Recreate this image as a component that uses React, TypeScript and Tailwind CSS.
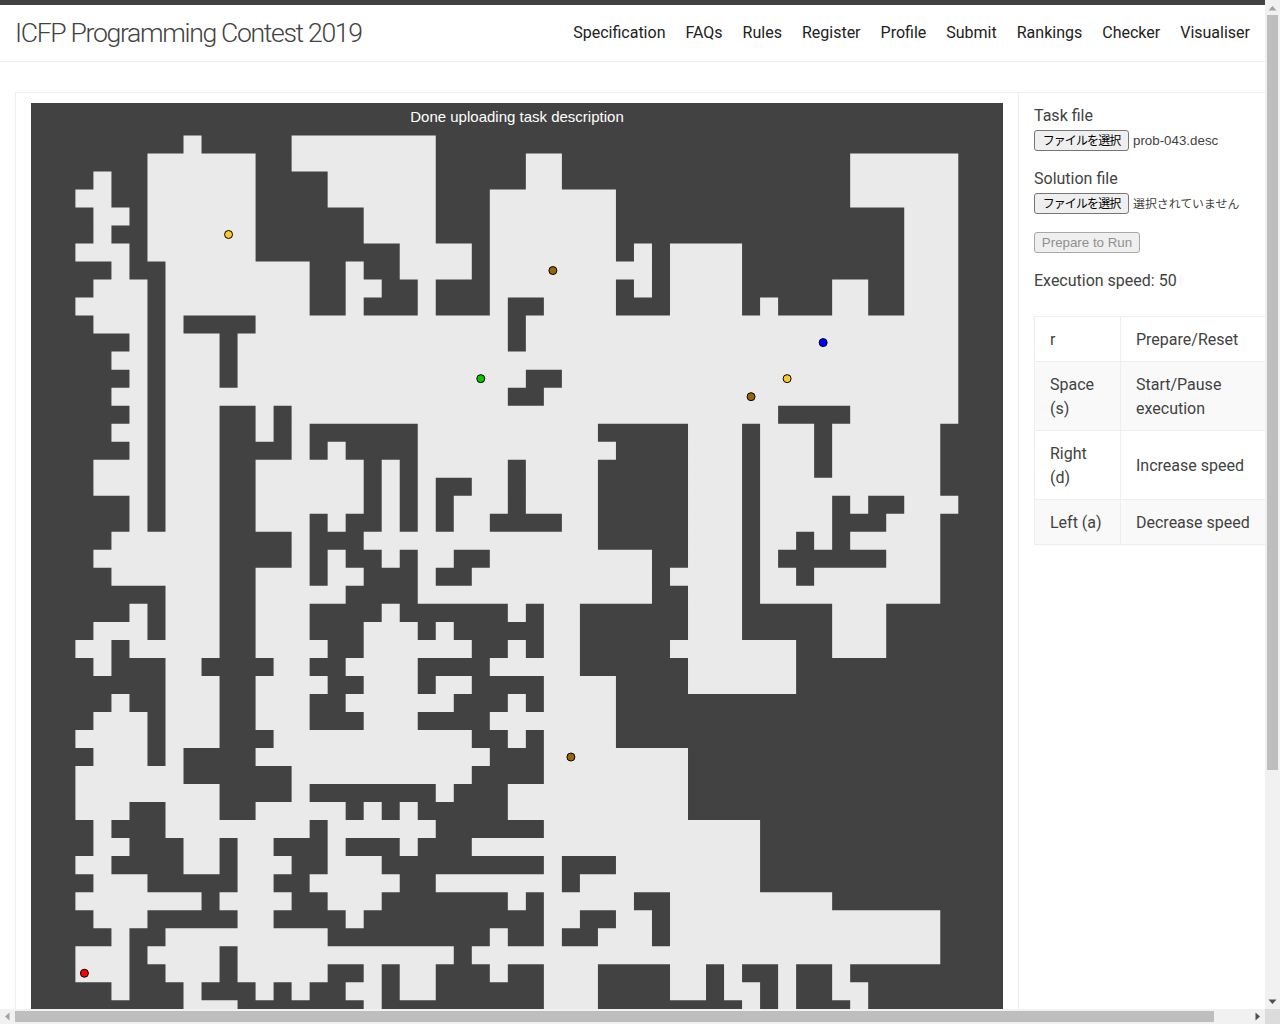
const NAV_ITEMS = ["Specification", "FAQs", "Rules", "Register", "Profile", "Submit", "Rankings", "Checker", "Visualiser"]

// light cell runs per row, start-end columns (exclusive)
const ROWS = [
  "6-7 12-20",
  "4-10 12-20 25-27 43-49",
  "1-2 4-10 14-20 25-27 43-49",
  "0-2 4-10 14-20 23-30 43-49",
  "1-3 4-10 16-20 23-30 46-49",
  "1-2 4-10 16-20 23-30 46-49",
  "0-3 4-10 18-22 23-30 31-32 33-37 46-49",
  "2-3 5-13 15-16 18-22 23-32 33-37 46-49",
  "1-4 5-13 15-17 19-20 23-30 31-32 33-37 42-44 46-49",
  "0-4 5-13 15-16 19-20 23-24 26-30 33-37 38-39 42-44 46-49",
  "1-4 5-6 10-24 25-49",
  "3-4 5-8 9-24 25-49",
  "2-4 5-8 9-49",
  "3-4 5-8 9-25 27-49",
  "2-4 5-24 26-49",
  "3-4 5-8 10-11 12-39 43-49",
  "2-4 5-8 10-11 12-13 19-29 34-37 38-41 42-48",
  "3-4 5-8 12-13 14-15 19-30 34-37 38-41 42-48",
  "1-4 5-8 10-16 17-18 19-24 25-29 34-37 38-41 42-48",
  "1-4 5-8 10-16 17-18 19-20 22-24 25-29 34-37 38-48",
  "3-4 5-8 10-16 17-18 19-20 21-24 25-29 34-37 38-42 43-44 46-49",
  "3-4 5-8 10-13 14-15 17-18 19-20 21-23 27-29 34-37 38-42 45-48",
  "2-8 12-13 16-29 34-37 38-40 41-42 43-48",
  "1-8 12-13 14-15 17-18 19-21 23-32 34-37 38-39 45-48",
  "2-8 10-13 14-16 19-20 22-32 33-37 38-40 41-48",
  "5-8 10-15 19-32 34-37 38-48",
  "3-4 5-8 10-13 17-18 24-25 26-28 34-37 42-45",
  "1-4 5-8 10-13 16-19 20-21 26-28 34-37 42-45",
  "0-2 3-8 10-14 16-22 24-25 26-28 33-40 42-45",
  "1-2 5-7 11-13 15-19 23-28 34-40",
  "5-8 10-14 16-19 20-22 26-30 34-40",
  "2-3 5-8 10-13 15-21 24-25 26-30",
  "1-4 5-8 10-13 16-19 23-30",
  "0-4 5-8 11-22 24-25 26-30",
  "1-4 5-6 10-23 26-34",
  "0-6 12-22 26-34",
  "0-8 12-13 20-21 24-34",
  "0-3 5-8 10-15 16-17 18-19 24-34",
  "1-2 5-13 14-20 26-38",
  "1-3 6-8 9-11 14-15 18-19 22-38",
  "0-2 6-8 9-12 14-17 26-27 30-38",
  "1-4 9-11 13-18 20-27 28-38",
  "0-7 8-12 14-17 24-25 26-31 33-42",
  "1-4 9-11 15-16 26-28 30-32 33-48",
  "2-3 5-14 23-24 26-27 29-32 33-48",
  "0-3 4-8 9-21 22-48",
  "0-3 5-8 9-14 16-17 18-20 23-24 26-29 33-35 36-37 39-40 42-43",
  "2-3 6-7 10-11 12-13 15-17 18-20 26-29 33-35 36-38 39-40 42-44",
  "6-9 16-17 26-29 37-38 39-40 43-44",
]

const CELL = 18.018
const ORIGIN_X = 44.4
const ORIGIN_Y = 32.4

// one path for the whole floor so rows don't get seams between them
const floorPath = ROWS.map((row, r) =>
  row
    .split(" ")
    .map((run) => {
      const [a, b] = run.split("-").map(Number)
      const x = ORIGIN_X + a * CELL
      const y = ORIGIN_Y + r * CELL
      const w = (b - a) * CELL
      return `M${x} ${y}h${w}v${CELL}h${-w}z`
    })
    .join(""),
).join("")

// boosters and workers, by cell
const DOTS = [
  { c: 8, r: 5, fill: "#ffc92e" },
  { c: 26, r: 7, fill: "#996600" },
  { c: 41, r: 11, fill: "#0000ff" },
  { c: 39, r: 13, fill: "#ffc92e" },
  { c: 37, r: 14, fill: "#996600" },
  { c: 22, r: 13, fill: "#00cc00" },
  { c: 27, r: 34, fill: "#996600" },
  { c: 0, r: 46, fill: "#ff0000" },
]

const KEYS = [
  ["r", "Prepare/Reset"],
  ["Space (s)", "Start/Pause execution"],
  ["Right (d)", "Increase speed"],
  ["Left (a)", "Decrease speed"],
]

function FileRow({ children }: { children: React.ReactNode }) {
  return (
    <div className="mb-[15px] flex h-6 items-start pt-[3px]">
      <button className="h-[21px] w-[95px] rounded-[3px] border border-[#767676] bg-[#efefef] pb-[2px] text-center font-['Noto_Sans_CJK_JP',sans-serif] text-[12px] leading-[16px] tracking-[-0.9px] whitespace-nowrap text-black">
        ファイルを選択
      </button>
      {children}
    </div>
  )
}

function Arrow({ points, fill }: { points: string; fill: string }) {
  return (
    <svg width="15" height="15" className="shrink-0">
      <polygon points={points} fill={fill} />
    </svg>
  )
}

export default function App() {
  return (
    <div className="grid h-[1024px] w-[1280px] grid-cols-[1265px_15px] grid-rows-[1009px_15px] overflow-hidden bg-white font-['Roboto',sans-serif] text-[#424242]">
      <div className="overflow-hidden">
        {/* Navbar */}
        <nav className="flex h-[62px] items-center justify-between border-t-[5px] border-b border-t-[#424242] border-b-[#eeeeee] px-[15px]">
          <a className="text-[26.6px] leading-[30px] font-light tracking-[-1.33px] text-[#424242]">ICFP Programming Contest 2019</a>
          <ul className="flex gap-5 text-base leading-6 text-[#212121]">
            {NAV_ITEMS.map((item) => (
              <li key={item}>{item}</li>
            ))}
          </ul>
        </nav>

        {/* Main card */}
        <div className="w-[1303px] px-[15px] pt-[30px] pb-[15px]">
          <div className="flex border border-[#eeeeee]">
            <div className="w-[1002px] shrink-0 px-[15px] py-[10px]">
              <div className="relative">
                <svg width="972" height="1179" className="bg-[#424242]">
                  <path d={floorPath} fill="#eaeaea" />
                  {DOTS.map((d) => (
                    <circle
                      key={`${d.c}-${d.r}`}
                      cx={ORIGIN_X + (d.c + 0.5) * CELL}
                      cy={ORIGIN_Y + (d.r + 0.5) * CELL}
                      r="4"
                      fill={d.fill}
                      stroke="#000"
                      strokeWidth="1"
                    />
                  ))}
                </svg>
                <div className="absolute top-[5px] right-0 left-0 text-center font-['Liberation_Sans',sans-serif] text-[15px] leading-[18px] text-white">
                  Done uploading task description
                </div>
              </div>
            </div>

            {/* Controls */}
            <div className="min-w-0 flex-1 border-l border-[#eeeeee] px-[15px] pt-[10px]">
              <label className="block h-6 text-base leading-[26px]">Task file</label>
              <FileRow>
                <span className="ml-1 font-['Liberation_Sans',sans-serif] text-[13.33px] leading-[21px] text-[#424242]">prob-043.desc</span>
              </FileRow>
              <label className="block h-6 text-base leading-[26px]">Solution file</label>
              <FileRow>
                <span className="ml-1 font-['Noto_Sans_CJK_JP',sans-serif] text-[11.9px] leading-[20px] text-[#424242]">選択されていません</span>
              </FileRow>
              <div className="mb-[15px] flex h-6 items-start pt-[3px]">
                <button
                  disabled
                  className="h-[21px] w-[106px] rounded-[3px] border border-[#a8a8a8] bg-[#efefef] text-center font-['Liberation_Sans',sans-serif] text-[13.33px] leading-[18px] text-[#8f8f8f]"
                >
                  Prepare to Run
                </button>
              </div>
              <p className="mb-6 h-6 text-base leading-[26px]">Execution speed: 50</p>
              <table className="w-[238px] table-fixed border-collapse text-base leading-6">
                <tbody>
                  {KEYS.map(([key, action], i) => (
                    <tr key={key} className={i % 2 === 1 ? "bg-[#f9f9f9]" : ""}>
                      <td className="w-[86px] border border-[#eeeeee] px-[15px] pt-[11px] pb-[9px] align-middle">{key}</td>
                      <td className="border border-[#eeeeee] px-[15px] pt-[11px] pb-[9px] align-middle">{action}</td>
                    </tr>
                  ))}
                </tbody>
              </table>
            </div>
          </div>
        </div>
      </div>

      {/* Vertical scrollbar */}
      <div className="flex flex-col justify-between bg-[#f1f1f1]">
        <div>
          <Arrow points="3.5,10.5 11.5,10.5 7.5,6" fill="#a3a3a3" />
          <div className="mx-[2px] h-[755px] bg-[#bebebe]"></div>
        </div>
        <Arrow points="3.5,5.5 11.5,5.5 7.5,10" fill="#505050" />
      </div>

      {/* Horizontal scrollbar */}
      <div className="flex items-center justify-between bg-[#f1f1f1]">
        <div className="flex items-center">
          <Arrow points="9.5,3.5 9.5,11.5 5,7.5" fill="#a3a3a3" />
          <div className="h-[11px] w-[1199px] bg-[#bebebe]"></div>
        </div>
        <Arrow points="5.5,3.5 5.5,11.5 10,7.5" fill="#505050" />
      </div>
      <div className="bg-[#dcdcdc]"></div>
    </div>
  )
}
